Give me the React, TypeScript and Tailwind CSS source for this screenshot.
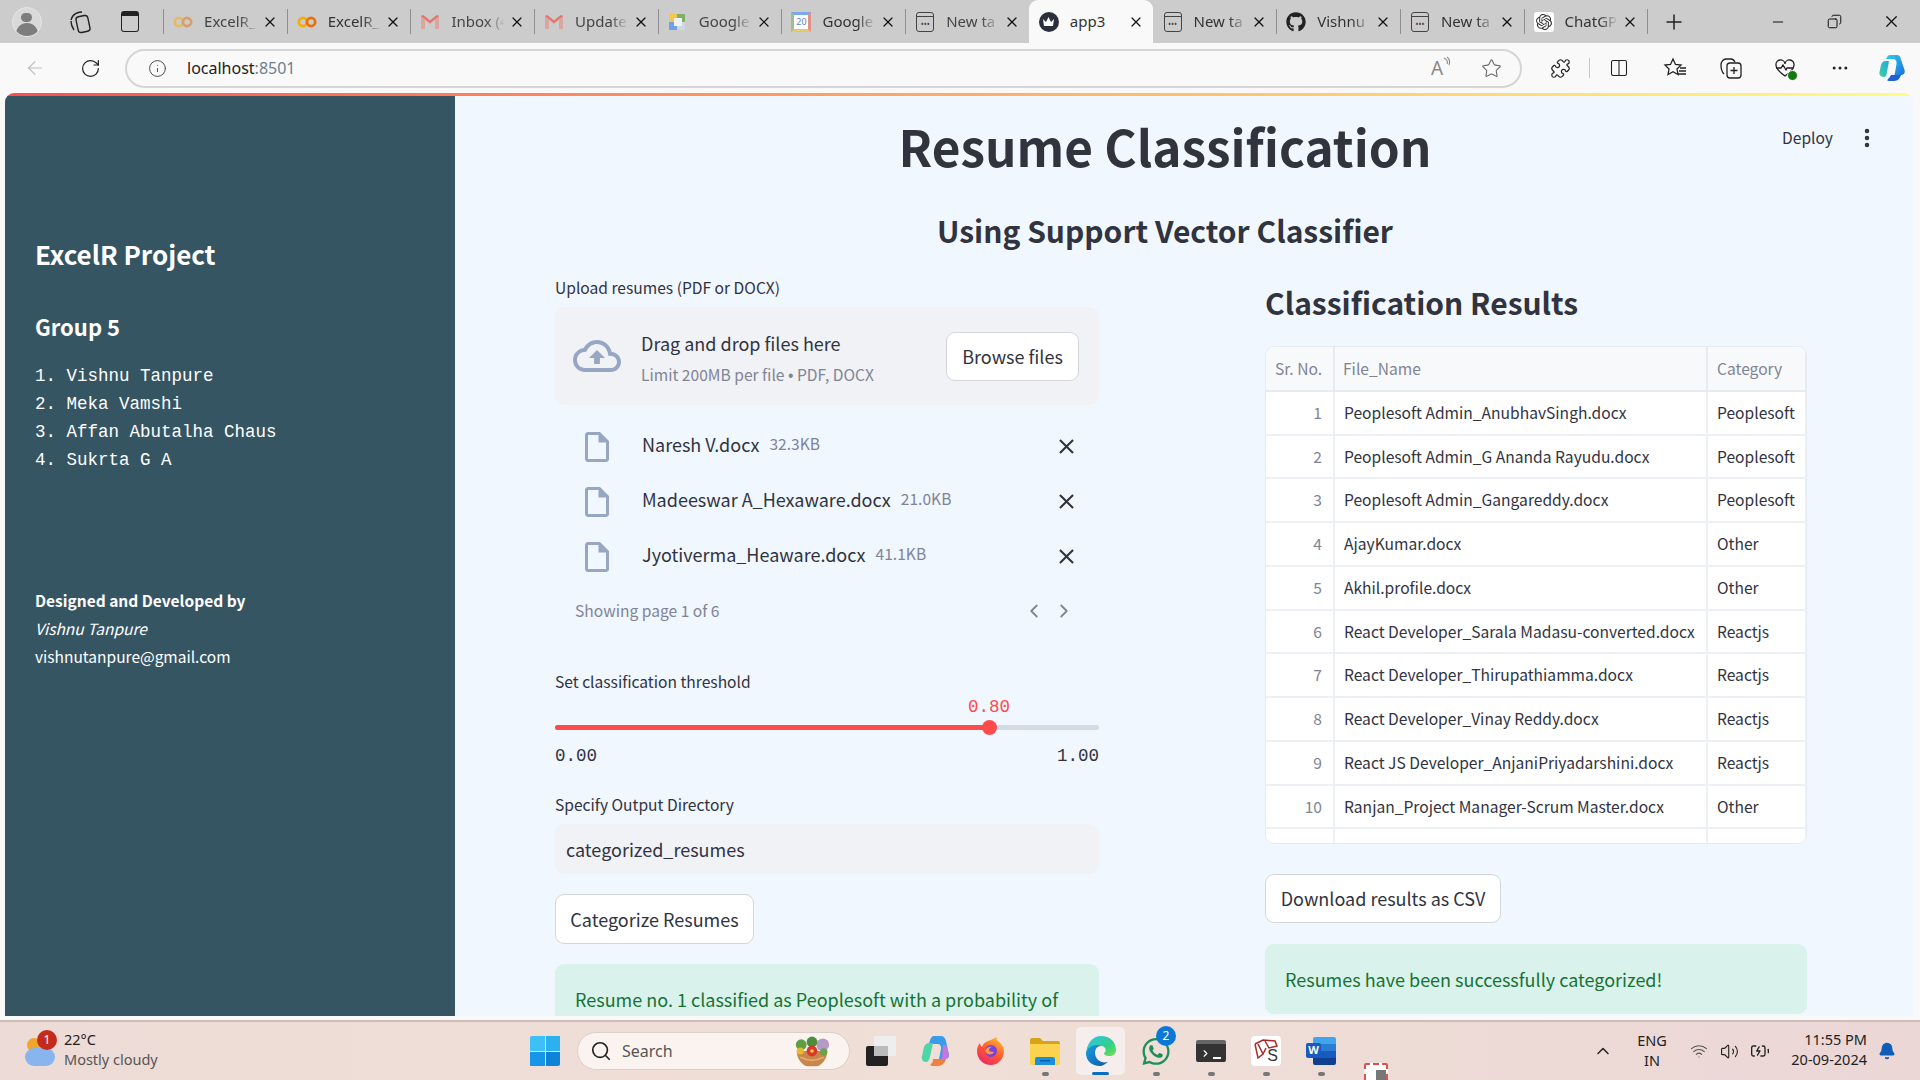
import { ArrowLeft, RotateCw, Info, Star, Plus, Minus, X, Copy, ChevronLeft, ChevronRight, ChevronUp, Search, Wifi, Volume2, Bell, Puzzle, EllipsisVertical, Ellipsis, Columns2, BatteryCharging } from "lucide-react";
import { FaGithub, FaWhatsapp } from "react-icons/fa";
import { SiOpenai } from "react-icons/si";

const rows = [
  ["Peoplesoft Admin_AnubhavSingh.docx", "Peoplesoft"],
  ["Peoplesoft Admin_G Ananda Rayudu.docx", "Peoplesoft"],
  ["Peoplesoft Admin_Gangareddy.docx", "Peoplesoft"],
  ["AjayKumar.docx", "Other"],
  ["Akhil.profile.docx", "Other"],
  ["React Developer_Sarala Madasu-converted.docx", "Reactjs"],
  ["React Developer_Thirupathiamma.docx", "Reactjs"],
  ["React Developer_Vinay Reddy.docx", "Reactjs"],
  ["React JS Developer_AnjaniPriyadarshini.docx", "Reactjs"],
  ["Ranjan_Project Manager-Scrum Master.docx", "Other"],
  ["Ramesh_Resume.docx", "Other"],
];

const files = [
  ["Naresh V.docx", "32.3KB"],
  ["Madeeswar A_Hexaware.docx", "21.0KB"],
  ["Jyotiverma_Heaware.docx", "41.1KB"],
];

const members = ["1. Vishnu Tanpure", "2. Meka Vamshi", "3. Affan Abutalha Chaus", "4. Sukrta G A"];

function Colab({ faded }: { faded?: boolean }) {
  return (
    <svg width="22" height="14" viewBox="0 0 22 14" fill="none" className={faded ? "opacity-50" : ""}>
      <circle cx="6.5" cy="7" r="4.5" stroke="#f9ab00" strokeWidth="3" />
      <circle cx="15.5" cy="7" r="4.5" stroke="#e8710a" strokeWidth="3" />
    </svg>
  );
}

function Gmail() {
  return (
    <svg width="20" height="16" viewBox="0 0 20 16" fill="none">
      <path d="M1 2v13h4V6l5 4 5-4v9h4V2l-2-1-7 5.500L3 1z" fill="#d9a7a0" />
      <path d="M1 2l9 7 9-7-2-1-7 5.500L3 1z" fill="#e57368" />
    </svg>
  );
}

function DriveDoc() {
  return (
    <svg width="20" height="20" viewBox="0 0 20 20">
      <rect x="1" y="2" width="8" height="8" fill="#f3c74f" />
      <rect x="9" y="2" width="8" height="8" fill="#7fb069" />
      <rect x="1" y="10" width="8" height="8" fill="#6fa0e8" />
      <rect x="9" y="10" width="8" height="8" fill="#cfd8e0" />
      <rect x="6" y="6" width="8" height="8" fill="#f1f1f1" />
    </svg>
  );
}

function CalendarIcon() {
  return (
    <div className="w-[20px] h-[20px] border-[3px] border-t-[#7ba7ec] border-l-[#9cc08f] border-b-[#e7c76e] border-r-[#e58f85] bg-white flex items-center justify-center text-[9px] text-[#5a86c8] leading-none">
      20
    </div>
  );
}

function NewTabIcon() {
  return (
    <div className="w-[18px] h-[20px] rounded-[3px] border-[1.5px] border-[#444] flex flex-col">
      <div className="h-[4px] border-b border-[#444]" />
      <div className="flex-1 flex items-center justify-center text-[8px] leading-none text-[#444]">•••</div>
    </div>
  );
}

function Crown() {
  return (
    <div className="w-[20px] h-[20px] rounded-full bg-[#2b2f3a] flex items-center justify-center">
      <svg width="13" height="11" viewBox="0 0 13 11"><path d="M1 3l3 3 2.500-5L9 6l3-3-1 7H2z" fill="#fff" /></svg>
    </div>
  );
}

function Tab({ icon, title, active, noSep, faded }: { icon: React.ReactNode; title: string; active?: boolean; noSep?: boolean; faded?: boolean }) {
  return (
    <div className={`relative w-[123.7px] h-full flex items-center pl-[10px] pr-[9px] text-[15px] ${active ? "bg-[#f9f9f9] rounded-t-[9px]" : ""}`}>
      {!noSep && <div className="absolute left-0 top-[9px] bottom-[9px] w-px bg-[#8f8f8f]" />}
      <div className="w-[20px] flex justify-center shrink-0">{icon}</div>
      <span className={`ml-[11px] flex-1 overflow-hidden whitespace-nowrap ${active ? "text-[#111]" : "[mask-image:linear-gradient(90deg,#000_65%,transparent)]"} ${faded ? "text-[#444]" : "text-[#333]"}`}>{title}</span>
      <X size={16} strokeWidth={1.8} className="text-[#111] shrink-0 ml-[4px]" />
    </div>
  );
}

function TabBar() {
  return (
    <div className="h-[43px] bg-[#cccccc] flex items-center shrink-0">
      <div className="w-[54px] flex justify-center">
        <div className="w-[30px] h-[30px] rounded-full bg-[#d9d9d9] border border-[#e6e6e6] overflow-hidden flex flex-col items-center">
          <div className="w-[11px] h-[11px] rounded-full bg-[#7d7d7d] mt-[5px]" />
          <div className="w-[22px] h-[14px] rounded-t-full bg-[#7d7d7d] mt-[1px]" />
        </div>
      </div>
      <div className="w-[52px] flex justify-center">
        <svg width="22" height="24" viewBox="0 0 22 24" fill="none" stroke="#222" strokeWidth="1.4">
          <rect x="8" y="6" width="12" height="16" rx="3" transform="rotate(-12 14 14)" />
          <path d="M5 5c2-2 5-3 8-3M2 10c1-3 2-5 4-6M5 20c-2-3-3-6-3-9" />
        </svg>
      </div>
      <div className="w-[50px] flex justify-center">
        <div className="w-[18px] h-[21px] rounded-[3px] border-[1.5px] border-[#222] border-t-[5px]" />
      </div>
      <div className="w-[8px]" />
      <div className="flex h-[43px] items-center">
        <Tab icon={<Colab faded />} title="ExcelR_" faded />
        <Tab icon={<Colab />} title="ExcelR_" />
        <Tab icon={<Gmail />} title="Inbox (4" faded />
        <Tab icon={<Gmail />} title="Update" faded />
        <Tab icon={<DriveDoc />} title="Google" faded />
        <Tab icon={<CalendarIcon />} title="Google" />
        <Tab icon={<NewTabIcon />} title="New ta" faded />
        <Tab icon={<Crown />} title="app3" active noSep />
        <Tab icon={<NewTabIcon />} title="New ta" noSep />
        <Tab icon={<FaGithub size={20} className="text-[#222]" />} title="Vishnu" />
        <Tab icon={<NewTabIcon />} title="New ta" />
        <Tab icon={<div className="w-[20px] h-[20px] bg-white rounded-[3px] flex items-center justify-center"><SiOpenai size={16} className="text-[#333]" /></div>} title="ChatGP" />
      </div>
      <div className="w-px h-[25px] bg-[#8f8f8f]" />
      <div className="w-[52px] flex justify-center"><Plus size={24} strokeWidth={1.5} className="text-[#222]" /></div>
      <div className="ml-[50px] w-[56px] flex justify-center"><Minus size={16} strokeWidth={1.6} className="text-[#111]" /></div>
      <div className="w-[57px] flex justify-center"><Copy size={15} strokeWidth={1.6} className="text-[#111] -scale-x-100" /></div>
      <div className="w-[58px] flex justify-center"><X size={19} strokeWidth={1.5} className="text-[#111]" /></div>
    </div>
  );
}

function CopilotIcon() {
  return (
    <svg width="32" height="32" viewBox="0 0 32 32">
      <defs>
        <linearGradient id="cp1" x1="0" y1="0" x2="1" y2="1">
          <stop offset="0" stopColor="#2fd0e8" />
          <stop offset="1" stopColor="#1e6fe0" />
        </linearGradient>
        <linearGradient id="cp2" x1="0" y1="1" x2="1" y2="0">
          <stop offset="0" stopColor="#3ed29a" />
          <stop offset="1" stopColor="#22a8e8" />
        </linearGradient>
      </defs>
      <path d="M13 3h7c2 0 3 1 3.500 3l4 12c1 3-1 5-4 5h-6l1-5 1-6c.5-3-1-5-4-5H9c1-2 2-4 4-4z" fill="url(#cp1)" />
      <path d="M4 13c.5-2 2-4 5-4h3l-2 11c-.5 3-1 5-3 5-4 0-5-3-4.500-5z" fill="url(#cp2)" />
      <path d="M14 23h10c-1 3-3 6-7 6h-5c-2 0-2-1-1-2 1-1 2-2 3-4z" fill="#1d5fd6" />
    </svg>
  );
}

function Toolbar() {
  return (
    <div className="h-[50px] bg-[#f9f9f9] flex items-center shrink-0">
      <div className="w-[70px] flex justify-center"><ArrowLeft size={22} strokeWidth={1.2} className="text-[#bdbdbd]" /></div>
      <div className="w-[40px] flex justify-center"><RotateCw size={21} strokeWidth={1.4} className="text-[#222]" /></div>
      <div className="ml-[15px] w-[1397px] h-[39px] rounded-[20px] border-2 border-[#d5d5d5] flex items-center">
        <Info size={19} strokeWidth={1.2} className="ml-[21px] text-[#444]" />
        <span className="ml-[20px] text-[16px] text-[#222]">localhost<span className="text-[#6f7f90]">:8501</span></span>
        <div className="ml-auto w-[50px] flex justify-center">
          <span className="text-[19px] text-[#888] leading-none">A</span>
          <svg width="8" height="12" viewBox="0 0 8 12" fill="none" stroke="#888" strokeWidth="1.1" className="-mt-[3px]"><path d="M1 2c3 1 4 4 3 6M4 1c3 2 3 5 2 8" /></svg>
        </div>
        <div className="w-[50px] mr-[4px] flex justify-center"><Star size={21} strokeWidth={1.2} className="text-[#666]" /></div>
      </div>
      <div className="ml-[22px] w-[32px] flex justify-center"><Puzzle size={21} strokeWidth={1.4} className="text-[#222]" /></div>
      <div className="ml-[13px] w-px h-[20px] bg-[#c8c8c8]" />
      <div className="ml-[13px] w-[32px] flex justify-center"><Columns2 size={20} strokeWidth={1.3} className="text-[#222]" /></div>
      <div className="ml-[24px] w-[32px] flex justify-center">
        <svg width="24" height="22" viewBox="0 0 24 22" fill="none" stroke="#222" strokeWidth="1.3">
          <path d="M10 2l2.500 5.500 5.500.6-4 3.900 1 5.500-5-2.800-5 2.800 1-5.500-4-3.900 5.500-.6zM17 11h6M16 14h7M15 17h8" />
        </svg>
      </div>
      <div className="ml-[24px] w-[32px] flex justify-center">
        <svg width="24" height="24" viewBox="0 0 24 24" fill="none" stroke="#222" strokeWidth="1.3">
          <path d="M5 18c-2-2-3-6-3-9 0-3 2-6 5-6h5c2 0 3 1 4 3" />
          <rect x="8" y="7" width="14" height="15" rx="3" />
          <path d="M15 11v7M11.500 14.500h7" />
        </svg>
      </div>
      <div className="ml-[22px] w-[32px] flex justify-center">
        <div className="relative">
          <svg width="22" height="20" viewBox="0 0 22 20" fill="none" stroke="#222" strokeWidth="1.3"><path d="M11 18C4 13 2 10 2 7a4.500 4.500 0 0 1 9-1 4.500 4.500 0 0 1 9 1c0 3-2 6-9 11zM2 10h5l2-3 3 5 1-2h6" /></svg>
          <div className="absolute -right-[2px] -bottom-[3px] w-[11px] h-[11px] rounded-full bg-[#107c10] border border-[#f9f9f9]" />
        </div>
      </div>
      <div className="ml-[23px] w-[32px] flex justify-center"><Ellipsis size={20} strokeWidth={1.6} className="text-[#222]" /></div>
      <div className="ml-[21px] w-[32px] flex justify-center"><CopilotIcon /></div>
    </div>
  );
}

function Sidebar() {
  return (
    <div className="w-[450px] shrink-0 bg-[#365563] text-white pl-[30px] font-['Noto_Sans_CJK_SC',sans-serif]">
      <div className="mt-[134px] h-[48px] leading-[48px] text-[26px] font-semibold">ExcelR Project</div>
      <div className="mt-[28px] h-[40px] leading-[40px] text-[22px] font-semibold">Group 5</div>
      <div className="mt-[16px] font-['Liberation_Mono',monospace] text-[17.5px] leading-[28px]">
        {members.map((m) => (
          <div key={m} className="h-[28px]">{m}</div>
        ))}
      </div>
      <div className="mt-[112px] text-[15.5px] leading-[28px]">
        <div className="font-bold">Designed and Developed by</div>
        <div className="italic">Vishnu Tanpure</div>
        <div>vishnutanpure@gmail.com</div>
      </div>
    </div>
  );
}

function SButton({ label, className }: { label: string; className: string }) {
  return (
    <div className={`h-[49px] bg-white border border-[#d5d6da] rounded-[9px] flex items-center justify-center text-[18px] text-[#31333f] ${className}`}>
      {label}
    </div>
  );
}

function FileIcon() {
  return (
    <svg width="36" height="36" viewBox="0 0 24 24" fill="#97a6c3">
      <path d="M14 2H6c-1.100 0-1.990.9-1.990 2L4 20c0 1.100.89 2 1.990 2H18c1.100 0 2-.9 2-2V8l-6-6zM6 20V4h7v5h5v11H6z" />
    </svg>
  );
}

function UploadColumn() {
  return (
    <div className="w-[544px] shrink-0">
      <div className="mt-[20px] h-[24px] leading-[24px] text-[15.6px]">Upload resumes (PDF or DOCX)</div>
      <div className="mt-[8px] h-[98px] bg-[#f0f2f6] rounded-[9px] flex items-center pl-[18px] pr-[20px]">
        <svg width="48" height="48" viewBox="0 0 24 24" fill="#97a6c3" className="shrink-0">
          <path d="M19.350 10.040C18.670 6.590 15.640 4 12 4 9.110 4 6.600 5.640 5.350 8.040 2.340 8.360 0 10.910 0 14c0 3.310 2.690 6 6 6h13c2.760 0 5-2.240 5-5 0-2.640-2.050-4.780-4.650-4.960zM19 18H6c-2.210 0-4-1.790-4-4 0-2.050 1.530-3.760 3.560-3.970l1.070-.11.5-.95C8.080 7.140 9.940 6 12 6c2.620 0 4.880 1.860 5.390 4.430l.3 1.500 1.530.11c1.560.1 2.780 1.410 2.780 2.960 0 1.650-1.350 3-3 3zM8 13h2.550v3h2.900v-3H16l-4-4z" />
        </svg>
        <div className="ml-[20px] flex-1 pt-[7px]">
          <div className="text-[18px] leading-[31px] text-[#31333f]">Drag and drop files here</div>
          <div className="text-[15.6px] leading-[31px] text-[#808495]">Limit 200MB per file <span className="font-['Liberation_Sans',sans-serif]">•</span> PDF, DOCX</div>
        </div>
        <SButton label="Browse files" className="w-[133px]" />
      </div>
      <div className="mt-[14px]">
        {files.map(([name, size]) => (
          <div key={name} className="h-[55px] flex items-center">
            <div className="w-[87px] pl-[24px] flex"><FileIcon /></div>
            <span className="text-[18px] text-[#31333f] pb-[5px]">{name}</span>
            <span className="ml-[10px] text-[15.6px] text-[#808495] pb-[5px]">{size}</span>
            <svg width="25" height="25" viewBox="0 0 24 24" fill="#31333f" className="ml-auto mr-[20px]">
              <path d="M19 6.410L17.590 5 12 10.590 6.410 5 5 6.410 10.590 12 5 17.590 6.410 19 12 13.410 17.590 19 19 17.590 13.410 12z" />
            </svg>
          </div>
        ))}
      </div>
      <div className="mt-[15px] h-[24px] flex items-center pl-[20px] text-[15.6px] text-[#808495]">
        <span>Showing page 1 of 6</span>
        <ChevronLeft size={22} strokeWidth={2} className="ml-auto text-[#808495]" />
        <ChevronRight size={22} strokeWidth={2} className="ml-[8px] mr-[24px] text-[#808495]" />
      </div>
      <div className="mt-[46px] h-[24px] leading-[24px] text-[15.6px]">Set classification threshold</div>
      <div className="mt-[5px] h-[18px] relative">
        <span className="absolute left-[434px] w-[0px] flex justify-center font-['Liberation_Mono',monospace] text-[17.5px] leading-[18px] text-[#ff4b4b]">0.80</span>
      </div>
      <div className="mt-[4px] h-[15px] flex items-center relative">
        <div className="w-full h-[5px] rounded-full bg-[#d5dae5] overflow-hidden">
          <div className="w-[80%] h-full bg-[#ff4b4b]" />
        </div>
        <div className="absolute left-[427px] w-[15px] h-[15px] rounded-full bg-[#ff4b4b]" />
      </div>
      <div className="mt-[11px] h-[20px] flex justify-between font-['Liberation_Mono',monospace] text-[17.5px] leading-[20px]">
        <span>0.00</span>
        <span>1.00</span>
      </div>
      <div className="mt-[26px] h-[24px] leading-[24px] text-[15.6px]">Specify Output Directory</div>
      <div className="mt-[8px] h-[50px] bg-[#f0f2f6] rounded-[9px] flex items-center pl-[11px] text-[18px]">categorized_resumes</div>
      <SButton label="Categorize Resumes" className="mt-[20px] w-[199px] h-[50px]" />
      <div className="mt-[20px] h-[100px] rounded-[9px] bg-[#d9f2ec] pt-[20px] pl-[20px] pr-[20px] text-[18px] leading-[30px] text-[#177233]">
        Resume no. 1 classified as Peoplesoft with a probability of
      </div>
    </div>
  );
}

function ResultsColumn() {
  return (
    <div className="w-[542px] shrink-0">
      <div className="mt-[23px] h-[48px] leading-[48px] text-[30px] font-semibold">Classification Results</div>
      <div className="mt-[20px] h-[498px] border border-[#e6eaf1] rounded-[9px] overflow-hidden bg-white text-[15.6px]">
        <table className="w-[540px] table-fixed border-collapse">
          <colgroup>
            <col className="w-[68px]" />
            <col className="w-[373px]" />
            <col className="w-[99px]" />
          </colgroup>
          <thead>
            <tr className="h-[43.75px] bg-[#f8f9fb] text-[#808495] text-left">
              <th className="font-normal pl-[9px] border-r-2 border-b-2 border-[#e6eaf1]">Sr. No.</th>
              <th className="font-normal pl-[8px] border-r-2 border-b-2 border-[#e6eaf1]">File_Name</th>
              <th className="font-normal pl-[9px] border-r-2 border-b-2 border-[#e6eaf1]">Category</th>
            </tr>
          </thead>
          <tbody>
            {rows.map(([name, cat], i) => (
              <tr key={name} className="h-[43.75px]">
                <td className="text-right pr-[11px] text-[#808495] border-r-2 border-b-2 border-[#edf0f5]">{i + 1}</td>
                <td className="pl-[9px] whitespace-nowrap overflow-hidden border-r-2 border-b-2 border-[#edf0f5]">{name}</td>
                <td className="pl-[9px] whitespace-nowrap overflow-hidden border-r-2 border-b-2 border-[#edf0f5]">{cat}</td>
              </tr>
            ))}
          </tbody>
        </table>
      </div>
      <SButton label="Download results as CSV" className="mt-[30px] w-[236px]" />
      <div className="mt-[21px] h-[70px] rounded-[9px] bg-[#d9f2ec] flex items-center pl-[20px] text-[18px] text-[#177233]">
        Resumes have been successfully categorized!
      </div>
    </div>
  );
}

function StreamlitApp() {
  return (
    <div className="flex-1 flex flex-col min-h-0 ml-[5px] mr-[7px] rounded-t-[9px] overflow-hidden">
      <div className="h-[3px] shrink-0 bg-gradient-to-r from-[#ff4b4b] to-[#fffd80]" />
      <div className="flex-1 flex min-h-0">
        <Sidebar />
        <div className="relative flex-1 min-w-0 bg-[#f0f7ff] overflow-hidden text-[#31333f] font-['Noto_Sans_CJK_SC',sans-serif]">
          <div className="absolute right-[80px] top-[29px] h-[24px] leading-[24px] text-[15.6px]">Deploy</div>
          <EllipsisVertical size={24} strokeWidth={2.5} className="absolute right-[34px] top-[30px]" />
          <div className="ml-[100px] w-[1220px] text-center">
            <div className="mt-[10px] h-[80px] leading-[80px] text-[49.5px] font-bold">Resume Classification</div>
            <div className="mt-[20px] h-[48px] leading-[48px] text-[30px] font-semibold">Using Support Vector Classifier</div>
          </div>
          <div className="flex ml-[100px] gap-[166px] mt-[1px]">
            <UploadColumn />
            <ResultsColumn />
          </div>
        </div>
      </div>
    </div>
  );
}

function Flowers() {
  return (
    <svg width="50" height="36" viewBox="0 0 50 40">
      <path d="M8 20h34c0 10-8 17-12 17H20C16 37 8 30 8 20z" fill="#c8864a" />
      <path d="M12 27c8 4 18 4 26 0" stroke="#e2ab70" strokeWidth="2" fill="none" />
      <circle cx="13" cy="13" r="6" fill="#5f9e45" />
      <circle cx="37" cy="13" r="7" fill="#b59ac7" />
      <circle cx="25" cy="10" r="6" fill="#4e8d3c" />
      <circle cx="25" cy="20" r="6" fill="#d8392b" />
      <circle cx="25" cy="20" r="2" fill="#f5d045" />
      <circle cx="12" cy="20" r="4" fill="#e6b92e" />
      <circle cx="38" cy="21" r="4" fill="#6ea04b" />
    </svg>
  );
}

function WindowsLogo() {
  return (
    <div className="grid grid-cols-2 gap-[1px] w-[30px] h-[30px]">
      <div className="bg-[#3cc0f5] rounded-tl-[2px]" />
      <div className="bg-[#2cb0ef]" />
      <div className="bg-[#1596e6]" />
      <div className="bg-[#0f82da] rounded-br-[2px]" />
    </div>
  );
}

function FirefoxIcon() {
  return (
    <svg width="30" height="30" viewBox="0 0 30 30">
      <defs>
        <linearGradient id="ff" x1="0.8" y1="0" x2="0.2" y2="1">
          <stop offset="0" stopColor="#ffbd2e" />
          <stop offset="0.5" stopColor="#ff5a2c" />
          <stop offset="1" stopColor="#e8266f" />
        </linearGradient>
      </defs>
      <path d="M15 29C7 29 1 23 1 15c0-3 1-6 3-8 0 2 1 3 2 4 1-3 3-5 6-6 4-1 8-4 9-4-1 2 0 3 2 5 3 2 5 6 5 9 0 8-6 14-13 14z" fill="url(#ff)" />
      <circle cx="15" cy="15" r="6" fill="#7542e5" />
      <path d="M9 15c1-3 4-5 8-4-3 0-4 2-4 3s2 2 5 2c-1 3-7 4-9-1z" fill="#ff9640" />
    </svg>
  );
}

function ExplorerIcon() {
  return (
    <svg width="30" height="28" viewBox="0 0 30 28">
      <path d="M0 3a2 2 0 0 1 2-2h8l3 3h15a2 2 0 0 1 2 2v3H0z" fill="#d9a21b" />
      <path d="M0 7h30v19a2 2 0 0 1-2 2H2a2 2 0 0 1-2-2z" fill="#fcd34f" />
      <path d="M5 22a2 2 0 0 1 2-2h16a2 2 0 0 1 2 2v6H5z" fill="#1b8fdc" />
      <rect x="10" y="23" width="10" height="1.5" fill="#0c5ea8" />
    </svg>
  );
}

function EdgeIcon() {
  return (
    <svg width="30" height="30" viewBox="0 0 30 30">
      <defs>
        <linearGradient id="eg" x1="0" y1="0" x2="1" y2="1">
          <stop offset="0" stopColor="#35c1f1" />
          <stop offset="0.6" stopColor="#2fd18a" />
          <stop offset="1" stopColor="#75e04a" />
        </linearGradient>
        <linearGradient id="eb" x1="0" y1="0" x2="1" y2="1">
          <stop offset="0" stopColor="#1b9de2" />
          <stop offset="1" stopColor="#0c59a4" />
        </linearGradient>
      </defs>
      <path d="M15 0c9 0 15 6 15 14 0 4-3 6-7 6-3 0-5-1-5-3 2-1 2-3 1-5-2-3-8-3-12 0C3 15 1 18 0 20 0 8 6 0 15 0z" fill="url(#eg)" />
      <path d="M0 17c1-5 6-8 11-8 3 0 4 1 4 1-4 0-6 3-6 7 0 6 6 11 13 9-3 2-5 4-8 4C6 30 0 25 0 17z" fill="url(#eb)" />
    </svg>
  );
}

function TaskIcon({ children, dot, className }: { children: React.ReactNode; dot?: boolean; className: string }) {
  return (
    <div className={`relative h-[48px] flex items-center justify-center ${className}`}>
      {children}
      {dot && <div className="absolute bottom-[-1px] w-[7px] h-[4px] rounded-full bg-[#777]" />}
    </div>
  );
}

function Taskbar() {
  return (
    <div className="h-[60px] shrink-0 border-t-2 border-[#cdbcb8] bg-gradient-to-r from-[#eddbd7] via-[#f0dfd6] to-[#ebd7d6] flex items-center font-['Noto_Sans',sans-serif] text-[14.5px] text-[#222]">
      <div className="relative ml-[25px] w-[30px] h-[30px] shrink-0">
        <div className="absolute left-[2px] top-[2px] w-[14px] h-[14px] rounded-full bg-[#f0a52c]" />
        <div className="absolute left-0 bottom-0 w-[30px] h-[18px] rounded-full bg-[#88b5ee]" />
        <div className="absolute left-[12px] -top-[6px] w-[20px] h-[20px] rounded-full bg-[#c42b1c] text-white text-[12px] flex items-center justify-center">1</div>
      </div>
      <div className="ml-[9px] w-[120px] leading-[20px] -mt-[4px]">
        <div>22°C</div>
        <div className="text-[#555]">Mostly cloudy</div>
      </div>
      <div className="ml-[346px]"><WindowsLogo /></div>
      <div className="ml-[17px] w-[273px] h-[38px] rounded-full bg-[#fbf3ef] border border-[#dccfca] flex items-center pl-[12px]">
        <Search size={22} strokeWidth={1.8} className="text-[#222]" />
        <span className="ml-[10px] text-[16px] text-[#555]">Search</span>
        <div className="ml-auto mr-[12px]"><Flowers /></div>
      </div>
      <TaskIcon className="ml-[16px] w-[30px]">
        <div className="relative w-[30px] h-[30px]">
          <div className="absolute right-0 top-0 w-[22px] h-[20px] bg-[#eee] rounded-[2px]" />
          <div className="absolute left-0 bottom-0 w-[22px] h-[20px] bg-[#222] rounded-[2px]" />
          <div className="absolute left-[8px] top-[10px] w-[14px] h-[10px] bg-[#bbb]" />
        </div>
      </TaskIcon>
      <TaskIcon className="ml-[25px] w-[30px]">
        <svg width="30" height="32" viewBox="0 0 30 32">
          <path d="M12 1h8c3 0 4 2 5 5l3 14c0 3-2 4-5 4h-5l2-10c.5-3-1-5-3-5H8c1-4 2-8 5-8z" fill="#3a9be8" />
          <path d="M3 12c1-3 3-4 5-4h4l-3 14c-1 3-2 5-4 5-3 0-5-3-4-6z" fill="#4ed6a8" />
          <path d="M12 24h13c-1 4-4 7-8 7h-5c-3 0-3-2-1-3 1-1 1-3 1-4z" fill="#f0803f" />
          <path d="M22 10h3l3 10c0 3-2 4-4 4h-3z" fill="#c875e0" />
        </svg>
      </TaskIcon>
      <TaskIcon className="ml-[25px] w-[30px]"><FirefoxIcon /></TaskIcon>
      <TaskIcon dot className="ml-[23px] w-[32px]"><ExplorerIcon /></TaskIcon>
      <TaskIcon className="ml-[15px] w-[49px] bg-[#f6eeec] rounded-[5px]">
        <EdgeIcon />
        <div className="absolute bottom-0 w-[17px] h-[3px] rounded-full bg-[#0a6cc4]" />
      </TaskIcon>
      <TaskIcon dot className="ml-[16px] w-[30px]">
        <FaWhatsapp size={31} className="text-[#1b8f5a]" />
        <div className="absolute -right-[5px] -top-[1px] w-[20px] h-[20px] rounded-full bg-[#0b78d6] text-white text-[12px] flex items-center justify-center">2</div>
      </TaskIcon>
      <TaskIcon dot className="ml-[25px] w-[30px]">
        <div className="w-[30px] h-[22px] rounded-[2px] bg-[#333] border-t-[4px] border-t-[#666] flex items-end pl-[4px] pb-[3px] gap-[2px]">
          <ChevronRight size={11} strokeWidth={2.5} className="text-white" />
          <div className="w-[8px] h-[2px] bg-white" />
        </div>
      </TaskIcon>
      <TaskIcon dot className="ml-[25px] w-[30px]">
        <div className="relative w-[30px] h-[30px] bg-white rounded-[4px] overflow-hidden">
          <svg width="30" height="30" viewBox="0 0 30 30" fill="none" stroke="#a82a2a" strokeWidth="1.5">
            <path d="M4 8l8-4 12 1 2 5-8 2-4-7M4 8l3 14 5-4-5-10M12 18l3-6" />
          </svg>
          <span className="absolute right-[3px] bottom-[2px] text-[16px] leading-none font-['Liberation_Sans',sans-serif] text-[#333]">S</span>
        </div>
      </TaskIcon>
      <TaskIcon dot className="ml-[25px] w-[30px]">
        <div className="relative w-[30px] h-[28px] flex justify-end">
          <div className="w-[23px] h-full rounded-[2px] flex flex-col overflow-hidden">
            <div className="flex-1 bg-[#41a5ee]" />
            <div className="flex-1 bg-[#2b7cd3]" />
            <div className="flex-1 bg-[#185abd]" />
            <div className="flex-1 bg-[#103f91]" />
          </div>
          <div className="absolute left-0 top-[6px] w-[15px] h-[15px] rounded-[2px] bg-[#185abd] text-white text-[11px] font-bold flex items-center justify-center">W</div>
        </div>
      </TaskIcon>
      <div className="ml-[28px] self-end w-[24px] h-[17px] bg-white border-x-2 border-t-2 border-dashed border-[#d9534f] rounded-t-[2px] flex items-end justify-end">
        <div className="w-[10px] h-[10px] bg-[#777]" />
      </div>
      <div className="ml-[205px] w-[20px] flex justify-center"><ChevronUp size={20} strokeWidth={1.8} /></div>
      <div className="ml-[24px] w-[30px] text-center leading-[20px] -mt-[2px]">
        <div>ENG</div>
        <div>IN</div>
      </div>
      <div className="ml-[22px] w-[20px] flex justify-center"><Wifi size={18} strokeWidth={1.6} className="text-[#555]" /></div>
      <div className="ml-[10px] w-[20px] flex justify-center"><Volume2 size={19} strokeWidth={1.4} /></div>
      <div className="ml-[10px] w-[22px] flex justify-center"><BatteryCharging size={20} strokeWidth={1.6} /></div>
      <div className="ml-[8px] w-[88px] text-right leading-[20px] -mt-[4px]">
        <div>11:55 PM</div>
        <div>20-09-2024</div>
      </div>
      <div className="ml-[10px] w-[20px] flex justify-center"><Bell size={18} fill="#0f5db8" className="text-[#0f5db8]" /></div>
    </div>
  );
}

export default function App() {
  return (
    <div className="w-[1920px] h-[1080px] overflow-hidden flex flex-col bg-[#f9f9f9] font-['Noto_Sans',sans-serif]">
      <TabBar />
      <Toolbar />
      <div className="flex-1 min-h-0 flex flex-col pb-[4px]">
        <StreamlitApp />
      </div>
      <Taskbar />
    </div>
  );
}
